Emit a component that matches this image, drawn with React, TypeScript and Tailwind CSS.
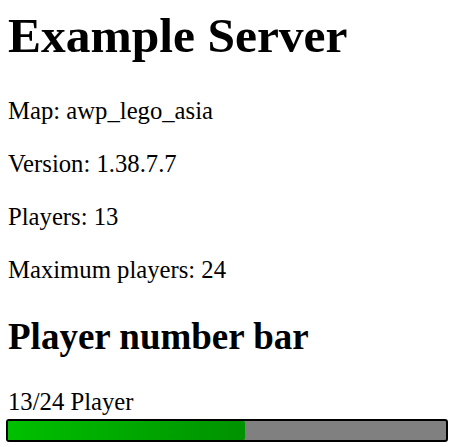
const serif = "font-['Liberation_Serif','Times_New_Roman',serif]";

const server = {
  name: "Example Server",
  map: "awp_lego_asia",
  version: "1.38.7.7",
  players: 13,
  maxPlayers: 24,
};

function PlayerBar({ players, max }: { players: number; max: number }) {
  const pct = (players / max) * 100;
  return (
    <div className="-ml-[2px] w-[442px] h-[23px] border-2 border-black rounded-[3px] bg-[#808080] overflow-hidden">
      <div
        className="h-full rounded-r-[2px] bg-gradient-to-r from-[#00c000] to-[#009200]"
        style={{ width: `${pct}%` }}
      />
    </div>
  );
}

export default function App() {
  return (
    <div className={`min-h-screen bg-white text-black px-[8px] pt-[8px] ${serif}`}>
      <h1 className="text-[49.5px] leading-[55px] font-bold mb-[34px]">{server.name}</h1>

      <p className="text-[24.7px] leading-[28px] mb-[25px]">Map: {server.map}</p>
      <p className="text-[24.7px] leading-[28px] mb-[25px]">Version: {server.version}</p>
      <p className="text-[24.7px] leading-[28px] mb-[25px]">Players: {server.players}</p>
      <p className="text-[24.7px] leading-[28px] mb-[32px]">Maximum players: {server.maxPlayers}</p>

      <h2 className="text-[37px] leading-[41px] font-bold mb-[31px]">Player number bar</h2>

      <p className="text-[24.7px] leading-[28px] mb-[3px]">
        {server.players}/{server.maxPlayers} Player
      </p>
      <PlayerBar players={server.players} max={server.maxPlayers} />
    </div>
  );
}
